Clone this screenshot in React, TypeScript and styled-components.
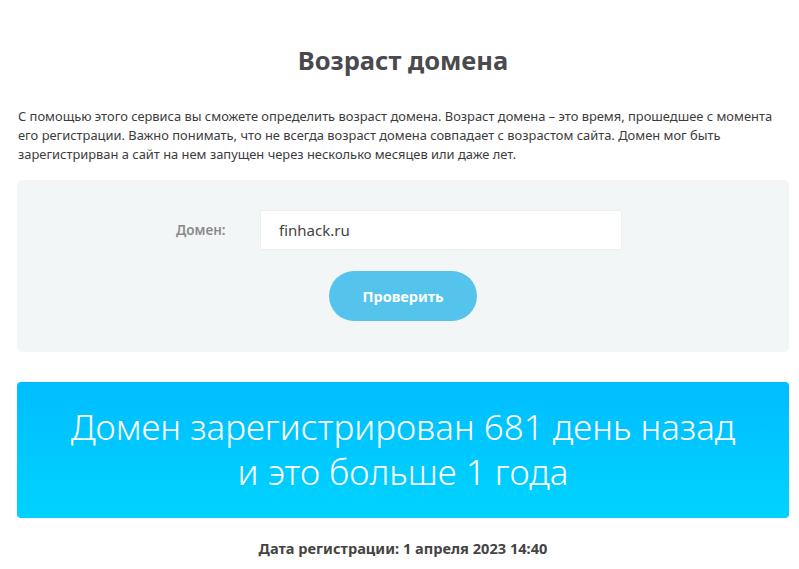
import { createGlobalStyle } from 'styled-components';
import styled from 'styled-components';

const GlobalStyle = createGlobalStyle`
  html, body {
    margin: 0;
    padding: 0;
    background: #ffffff;
  }
  body {
    font-family: "Noto Sans", "Open Sans", sans-serif;
    color: #444;
  }
`;

const Page = styled.main`
  width: 772px;
  margin-left: 17px;
  padding-top: 44px;
`;

const Title = styled.h1`
  margin: 0;
  text-align: center;
  font-size: 25.5px;
  font-weight: 700;
  color: #4a4a4e;
  line-height: 32px;
`;

const Intro = styled.p`
  margin: 31px 0 0 1px;
  font-size: 12.9px;
  line-height: 19px;
  color: #3c3c3c;
  white-space: nowrap;
`;

const FormPanel = styled.section`
  margin-top: 16px;
  background: #f3f6f7;
  border-radius: 5px;
  padding: 30px 0 31px;
  display: flex;
  flex-direction: column;
  align-items: center;
  gap: 21px;
`;

const FieldRow = styled.div`
  align-self: flex-start;
  margin-left: 159px;
  display: flex;
  align-items: center;
`;

const Label = styled.label`
  width: 84px;
  font-size: 13.5px;
  font-weight: 600;
  color: #8a8a8a;
`;

const Input = styled.input`
  box-sizing: border-box;
  width: 362px;
  height: 40px;
  border: 1px solid #eceeef;
  border-radius: 2px;
  background: #fff;
  padding: 0 18px;
  font-family: "Noto Sans", sans-serif;
  font-size: 15px;
  color: #444;
  outline: none;
`;

const CheckButton = styled.button`
  width: 148px;
  height: 50px;
  border: none;
  border-radius: 25px;
  background: #54c4ec;
  color: #fff;
  font-family: "Noto Sans", sans-serif;
  font-size: 14.5px;
  font-weight: 700;
  cursor: pointer;
`;

const Result = styled.section`
  margin-top: 30px;
  height: 136px;
  border-radius: 4px;
  background: linear-gradient(180deg, #00bdff 0%, #00d3ff 100%);
  display: flex;
  flex-direction: column;
  align-items: center;
  justify-content: center;
  padding-bottom: 3px;
  box-sizing: border-box;
`;

const ResultLine = styled.div`
  color: #fff;
  font-size: 35px;
  font-weight: 300;
  line-height: 45px;
  white-space: nowrap;
`;

const RegDate = styled.p`
  margin: 20px 0 0;
  text-align: center;
  font-size: 14.6px;
  font-weight: 700;
  color: #444;
`;

export default function App() {
  return (
    <>
      <GlobalStyle />
      <Page>
        <Title>Возраст домена</Title>
        <Intro>
          С помощью этого сервиса вы сможете определить возраст домена. Возраст домена – это время, прошедшее с момента
          <br />
          его регистрации. Важно понимать, что не всегда возраст домена совпадает с возрастом сайта. Домен мог быть
          <br />
          зарегистрирван а сайт на нем запущен через несколько месяцев или даже лет.
        </Intro>
        <FormPanel>
          <FieldRow>
            <Label htmlFor="domain">Домен:</Label>
            <Input id="domain" defaultValue="finhack.ru" />
          </FieldRow>
          <CheckButton>Проверить</CheckButton>
        </FormPanel>
        <Result>
          <ResultLine>Домен зарегистрирован 681 день назад</ResultLine>
          <ResultLine>и это больше 1 года</ResultLine>
        </Result>
        <RegDate>Дата регистрации: 1 апреля 2023 14:40</RegDate>
      </Page>
    </>
  );
}
